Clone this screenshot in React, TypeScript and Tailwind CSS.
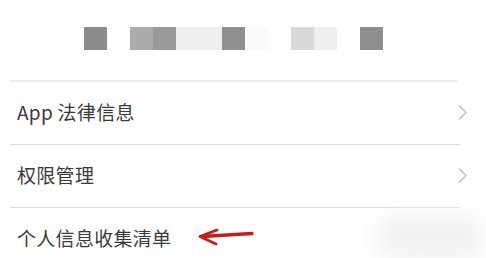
const FONT = { fontFamily: '"Noto Sans CJK SC", "Noto Sans", sans-serif' };

/* ================= MOSAIC ================= */

const TILES = [
  "bg-[#8c8c8c]",
  "bg-transparent",
  "bg-[#acacac]",
  "bg-[#9a9a9a]",
  "bg-[#efefef]",
  "bg-[#efefef]",
  "bg-[#909090]",
  "bg-[#fafafa]",
  "bg-transparent",
  "bg-[#d9d9d9]",
  "bg-[#efefef]",
  "bg-transparent",
  "bg-[#8f8f8f]",
];

const Chevron = () => (
  <svg width="10" height="15" viewBox="0 0 10 15" fill="none">
    <path d="M1.5 1 L8 7.5 L1.5 14" stroke="#c4c4c4" strokeWidth="1.6" strokeLinecap="round" strokeLinejoin="round" />
  </svg>
);

const RedArrow = () => (
  <svg width="56" height="20" viewBox="0 0 56 20" fill="none">
    <path d="M54 4.5 L4 7.5" stroke="#c21f1c" strokeWidth="3.4" strokeLinecap="round" />
    <path d="M19 1 L2 7.6 L18 15" stroke="#c21f1c" strokeWidth="2.8" strokeLinecap="round" strokeLinejoin="round" />
  </svg>
);

const Row = ({ label, arrow, chevron }: { label: string; arrow?: boolean; chevron?: boolean }) => (
  <div className="h-[62px] flex items-center pl-[17px] pr-[18px]">
    <span className="text-[19px] leading-none text-[#3a3a3a] tracking-[0.3px] pb-[3px]">{label}</span>
    {arrow && (
      <span className="ml-[27px] mb-[1px]">
        <RedArrow />
      </span>
    )}
    <span className="flex-1" />
    {chevron && (
      <span className="pb-[2px]">
        <Chevron />
      </span>
    )}
  </div>
);

export default function App() {
  return (
    <div className="relative w-[486px] h-[258px] bg-white overflow-hidden" style={FONT}>
      {/* ================= HEADER ================= */}
      <div className="h-[80px] pt-[27px] pl-[84px] flex">
        {TILES.map((c, i) => (
          <div key={i} className={`w-[23px] h-[23px] ${c}`} />
        ))}
      </div>

      <div className="ml-[10px] w-[447px] h-[2px] bg-[#ebebeb]" />

      <Row label="App 法律信息" chevron />
      <div className="ml-[10px] w-[450px] h-px bg-[#dcdcdc]" />

      <Row label="权限管理" chevron />
      <div className="ml-[10px] w-[450px] h-px bg-[#dcdcdc]" />

      <Row label="个人信息收集清单" arrow />

      {/* faint shadow bottom right */}
      <div className="absolute left-[375px] top-[212px] w-[110px] h-[50px] rounded-full bg-[#f3f3f3] blur-[10px]" />
    </div>
  );
}
